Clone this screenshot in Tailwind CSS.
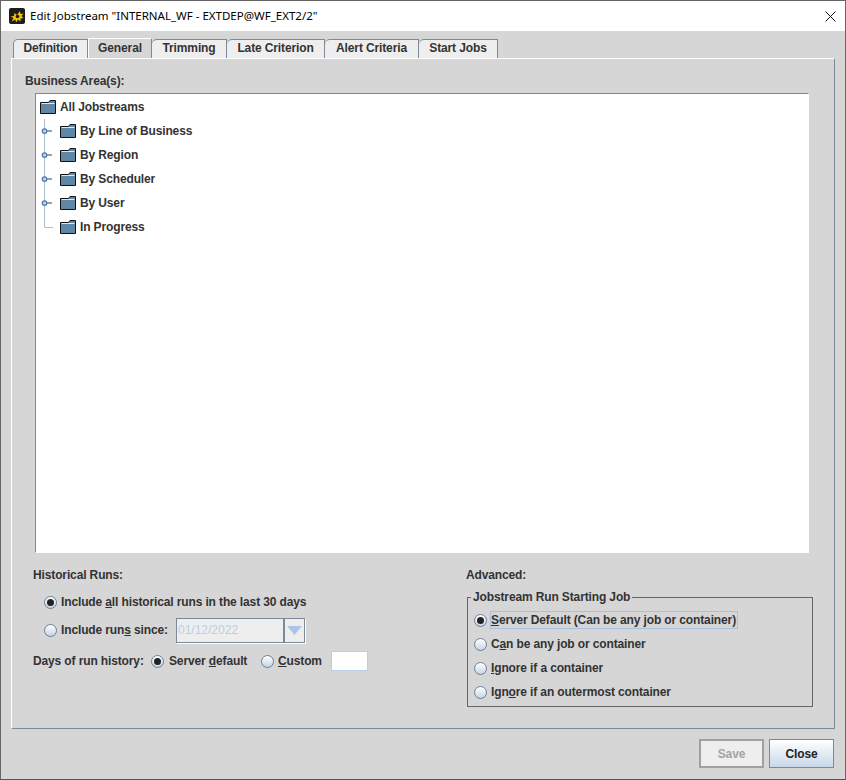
<!DOCTYPE html>
<html>
<head>
<meta charset="utf-8">
<script src="https://cdn.jsdelivr.net/npm/@tailwindcss/browser@4"></script>
</head>
<body class="m-0 bg-[#d6d6d6]">
<div class="w-[846px] h-[780px] flex flex-col border border-[#666] border-b-[#555] font-['Liberation_Sans',Arial,sans-serif] text-[12px] font-bold tracking-[-0.13px] text-[#333] overflow-hidden">
  <!-- title bar -->
  <div class="h-[30px] bg-white flex items-center pl-[8px] pr-[9px] shrink-0">
    <svg class="w-[16px] h-[16px] shrink-0" viewBox="0 0 16 16"><rect width="16" height="16" rx="2" fill="#1c1c1c"/><path d="M11 3l.5 3 3-.5-2 2.500 2 2-3 .5 0 3-2.500-2-2 3-.5-3-4 2 2-3.500-3-1.500 3.500-.5 .5-3 2.500 2z" fill="#f5c400"/><circle cx="8.500" cy="8.500" r="1.800" fill="#1c1c1c"/></svg>
    <span class="ml-[5px] text-[11.5px] font-normal tracking-[0px] text-[#000] font-['Noto_Sans','Liberation_Sans',sans-serif]">Edit Jobstream "INTERNAL_WF - EXTDEP@WF_EXT2/2"</span>
    <svg class="ml-auto w-[11px] h-[11px]" viewBox="0 0 11 11"><path d="M.5.500l10 10M10.500.500l-10 10" stroke="#111" stroke-width="1" fill="none"/></svg>
  </div>
  <!-- dialog body -->
  <div class="flex-1 flex flex-col px-[10px] pt-[8px]">
    <!-- tabs -->
    <div class="flex h-[19px] pl-[2px] items-end shrink-0 relative z-10">
      <div class="w-[75px] h-[19px] pb-[2px] bg-[#eeeeee] border-l border-t border-r border-[#7a8a99] rounded-tl-[5px] flex items-center justify-center">Definition</div>
      <div class="w-[64px] h-[20px] pb-[2px] bg-[#d6d6d6] border-l border-t border-r border-white border-r-[#7a8a99] flex items-center justify-center">General</div>
      <div class="w-[75px] h-[19px] pb-[2px] bg-[#eeeeee] border-t border-r border-[#7a8a99] rounded-tl-[5px] flex items-center justify-center">Trimming</div>
      <div class="w-[98px] h-[19px] pb-[2px] bg-[#eeeeee] border-t border-r border-[#7a8a99] rounded-tl-[5px] flex items-center justify-center">Late Criterion</div>
      <div class="w-[94px] h-[19px] pb-[2px] bg-[#eeeeee] border-t border-r border-[#7a8a99] rounded-tl-[5px] flex items-center justify-center">Alert Criteria</div>
      <div class="w-[79px] h-[19px] pb-[2px] bg-[#eeeeee] border-t border-r border-[#7a8a99] rounded-tl-[5px] flex items-center justify-center">Start Jobs</div>
    </div>
    <!-- panel -->
    <div class="w-[824px] h-[671px] border border-[#7a8a99] border-t-white border-l-white shrink-0 flex flex-col pl-[23px]">
      <div class="h-[34px] flex items-center pt-[10px] leading-none"><span class="-ml-[10px]">Business Area(s):</span></div>
      <!-- tree -->
      <div class="w-[774px] h-[460px] bg-white border border-[#7a8a99] border-r-white border-b-white pt-[1px] shrink-0 box-border">
        <div class="h-[24px] flex items-center pl-[4px]">
          <svg class="w-[16px] h-[14px] shrink-0" viewBox="0 0 16 14"><path d="M.5 2.500h8l1.500-2h5.500v13H.5z" fill="#5f87a5" stroke="#111"/><path d="M1.500 3.500h13" stroke="#dfe8ef"/></svg>
          <span class="ml-[4px]">All Jobstreams</span>
        </div>
        <div class="h-[24px] flex items-center">
          <svg class="w-[24px] h-[24px] shrink-0" viewBox="0 0 24 24"><path d="M8.500 0v24" stroke="#a9bdd4" fill="none"/><circle cx="8.500" cy="12" r="2.200" fill="#c9d9ec" stroke="#4a78b0" stroke-width="1.300"/><path d="M11 12h5" stroke="#4a78b0" stroke-width="1.300"/></svg>
          <svg class="w-[16px] h-[14px] shrink-0" viewBox="0 0 16 14"><path d="M.5 2.500h8l1.500-2h5.500v13H.5z" fill="#5f87a5" stroke="#111"/><path d="M1.500 3.500h13" stroke="#dfe8ef"/></svg>
          <span class="ml-[4px]">By Line of Business</span>
        </div>
        <div class="h-[24px] flex items-center">
          <svg class="w-[24px] h-[24px] shrink-0" viewBox="0 0 24 24"><path d="M8.500 0v24" stroke="#a9bdd4" fill="none"/><circle cx="8.500" cy="12" r="2.200" fill="#c9d9ec" stroke="#4a78b0" stroke-width="1.300"/><path d="M11 12h5" stroke="#4a78b0" stroke-width="1.300"/></svg>
          <svg class="w-[16px] h-[14px] shrink-0" viewBox="0 0 16 14"><path d="M.5 2.500h8l1.500-2h5.500v13H.5z" fill="#5f87a5" stroke="#111"/><path d="M1.500 3.500h13" stroke="#dfe8ef"/></svg>
          <span class="ml-[4px]">By Region</span>
        </div>
        <div class="h-[24px] flex items-center">
          <svg class="w-[24px] h-[24px] shrink-0" viewBox="0 0 24 24"><path d="M8.500 0v24" stroke="#a9bdd4" fill="none"/><circle cx="8.500" cy="12" r="2.200" fill="#c9d9ec" stroke="#4a78b0" stroke-width="1.300"/><path d="M11 12h5" stroke="#4a78b0" stroke-width="1.300"/></svg>
          <svg class="w-[16px] h-[14px] shrink-0" viewBox="0 0 16 14"><path d="M.5 2.500h8l1.500-2h5.500v13H.5z" fill="#5f87a5" stroke="#111"/><path d="M1.500 3.500h13" stroke="#dfe8ef"/></svg>
          <span class="ml-[4px]">By Scheduler</span>
        </div>
        <div class="h-[24px] flex items-center">
          <svg class="w-[24px] h-[24px] shrink-0" viewBox="0 0 24 24"><path d="M8.500 0v24" stroke="#a9bdd4" fill="none"/><circle cx="8.500" cy="12" r="2.200" fill="#c9d9ec" stroke="#4a78b0" stroke-width="1.300"/><path d="M11 12h5" stroke="#4a78b0" stroke-width="1.300"/></svg>
          <svg class="w-[16px] h-[14px] shrink-0" viewBox="0 0 16 14"><path d="M.5 2.500h8l1.500-2h5.500v13H.5z" fill="#5f87a5" stroke="#111"/><path d="M1.500 3.500h13" stroke="#dfe8ef"/></svg>
          <span class="ml-[4px]">By User</span>
        </div>
        <div class="h-[24px] flex items-center">
          <svg class="w-[24px] h-[24px] shrink-0" viewBox="0 0 24 24"><path d="M8.500 0v12.500H17" stroke="#a9bdd4" fill="none"/></svg>
          <svg class="w-[16px] h-[14px] shrink-0" viewBox="0 0 16 14"><path d="M.5 2.500h8l1.500-2h5.500v13H.5z" fill="#5f87a5" stroke="#111"/><path d="M1.500 3.500h13" stroke="#dfe8ef"/></svg>
          <span class="ml-[4px]">In Progress</span>
        </div>
      </div>
      <!-- bottom section -->
      <div class="flex -ml-[2px] pt-[14px]">
        <!-- historical -->
        <div class="w-[433px] shrink-0">
          <div class="h-[16px] flex items-center">Historical Runs:</div>
          <div class="h-[24px] mt-[7px] flex items-center pl-[11px]">
            <span class="w-[13px] h-[13px] rounded-full border border-[#6f7f8f] bg-gradient-to-b from-white to-[#c5d4e6] flex items-center justify-center shrink-0"><span class="w-[7px] h-[7px] rounded-full bg-[#222]"></span></span>
            <span class="ml-[4px]">Include <u>a</u>ll historical runs in the last 30 days</span>
          </div>
          <div class="h-[26px] mt-[3px] flex items-center pl-[11px]">
            <span class="w-[13px] h-[13px] rounded-full border border-[#6f7f8f] bg-gradient-to-b from-white to-[#c5d4e6] shrink-0"></span>
            <span class="ml-[4px] w-[107px] whitespace-nowrap shrink-0">Include run<u>s</u> since:</span>
            <div class="ml-[8px] w-[129px] h-[25px] flex border border-[#7a8a99] bg-[#eeeeee] shadow-[1px_1px_0_#fff]">
              <span class="flex-1 flex items-center pl-[1px] text-[#b8cfe5] font-normal tracking-[0px]">01/12/2022</span>
              <span class="w-[21px] border-l-2 border-[#7a8a99] bg-[#eeeeee] flex items-center justify-center">
                <svg class="w-[15px] h-[9px]" viewBox="0 0 15 9"><path d="M0 0h15L7.500 9z" fill="#a9c6e6"/></svg>
              </span>
            </div>
          </div>
          <div class="h-[22px] mt-[7px] flex items-center">
            <span class="w-[109px] whitespace-nowrap shrink-0">Days of run history:</span>
            <span class="ml-[9px] w-[13px] h-[13px] rounded-full border border-[#6f7f8f] bg-gradient-to-b from-white to-[#c5d4e6] flex items-center justify-center shrink-0"><span class="w-[7px] h-[7px] rounded-full bg-[#222]"></span></span>
            <span class="ml-[5px] w-[80px] whitespace-nowrap shrink-0">Server <u>d</u>efault</span>
            <span class="ml-[12px] w-[13px] h-[13px] rounded-full border border-[#6f7f8f] bg-gradient-to-b from-white to-[#c5d4e6] shrink-0"></span>
            <span class="ml-[4px] w-[45px] shrink-0"><u>C</u>ustom</span>
            <span class="ml-[8px] w-[37px] h-[20px] bg-white border border-[#b8cfe5]"></span>
          </div>
        </div>
        <!-- advanced -->
        <div class="w-[350px] shrink-0">
          <div class="h-[16px] flex items-center">Advanced:</div>
          <div class="relative mt-[14px] ml-[1px] w-[346px] h-[110px] border border-[#666] pt-[10px] pl-[6px]">
            <span class="absolute -top-[9px] left-[3px] bg-[#d6d6d6] px-[2px] leading-[16px]">Jobstream Run Starting Job</span>
            <div class="h-[24px] flex items-center">
              <span class="w-[13px] h-[13px] rounded-full border border-[#6f7f8f] bg-gradient-to-b from-white to-[#c5d4e6] flex items-center justify-center shrink-0"><span class="w-[7px] h-[7px] rounded-full bg-[#222]"></span></span>
              <span class="ml-[3px] w-[248px] h-[18px] leading-[16px] whitespace-nowrap border border-[#a8c0dc]"><u>S</u>erver Default (Can be any job or container)</span>
            </div>
            <div class="h-[24px] flex items-center">
              <span class="w-[13px] h-[13px] rounded-full border border-[#6f7f8f] bg-gradient-to-b from-white to-[#c5d4e6] shrink-0"></span>
              <span class="ml-[4px]">C<u>a</u>n be any job or container</span>
            </div>
            <div class="h-[24px] flex items-center">
              <span class="w-[13px] h-[13px] rounded-full border border-[#6f7f8f] bg-gradient-to-b from-white to-[#c5d4e6] shrink-0"></span>
              <span class="ml-[4px]"><u>I</u>gnore if a container</span>
            </div>
            <div class="h-[24px] flex items-center">
              <span class="w-[13px] h-[13px] rounded-full border border-[#6f7f8f] bg-gradient-to-b from-white to-[#c5d4e6] shrink-0"></span>
              <span class="ml-[4px]">Ign<u>o</u>re if an outermost container</span>
            </div>
          </div>
        </div>
      </div>
    </div>
    <!-- buttons -->
    <div class="flex justify-end gap-[5px] pt-[10px] pr-[1px]">
      <div class="w-[65px] h-[29px] border-[2px] border-[#a0a0a0] bg-[#eeeeee] flex items-center justify-center text-[#a3a3a3]">Save</div>
      <div class="w-[65px] h-[29px] border border-[#7a8a99] bg-gradient-to-b from-white to-[#c8d8ea] flex items-center justify-center text-[#222]">Close</div>
    </div>
  </div>
</div>
</body>
</html>
